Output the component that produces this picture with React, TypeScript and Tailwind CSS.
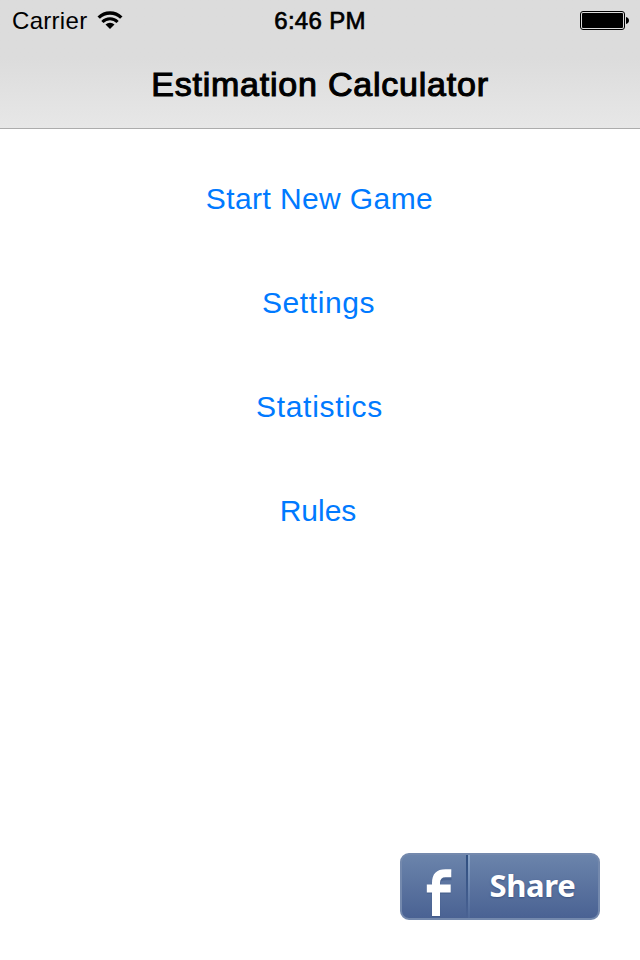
import React from "react";

const MENU = [
  {label: "Start New Game", style: "tracking-[0.4px] pr-[1px]"},
  {label: "Settings", style: "tracking-[0.6px] pr-[3px]"},
  {label: "Statistics", style: "tracking-[0.7px] pr-[1px]"},
  {label: "Rules", style: "pr-[4px]"},
];

const WifiIcon = () => (
  <svg width="26" height="18" viewBox="0 0 26 18" fill="none" stroke="#000" strokeWidth="3.4">
    <path d="M1.7 6.6a16 16 0 0 1 22.6 0"/>
    <path d="M5.4 11a10.6 10.6 0 0 1 15.2 0" strokeWidth="3.1"/>
    <path d="M13 18 8.5 13.6a6.3 6.3 0 0 1 9 0z" fill="#000" stroke="none"/>
  </svg>
);

const BatteryIcon = () => (
  <svg width="50" height="20" viewBox="0 0 50 20">
    <rect x="0.5" y="0.5" width="44" height="18" rx="2.5" fill="none" stroke="#000"/>
    <rect x="2" y="2" width="41" height="15" rx="1" fill="#000"/>
    <path d="M46 6c1.8.4 3 1.7 3 3.5s-1.2 3.1-3 3.5z" fill="#000"/>
  </svg>
);

const StatusBar = () => (
  <div className="grid grid-cols-3 h-10 items-center">
    <div className="flex items-center pl-3">
      <span className="text-[24px] leading-10 tracking-[0.3px] pt-[1px]">Carrier</span>
      <div className="ml-[10px] pb-[2px]"><WifiIcon/></div>
    </div>
    <span className="text-center text-[24px] leading-10 tracking-[0.3px] pt-[1px] [-webkit-text-stroke:0.7px_#000]">6:46 PM</span>
    <div className="flex justify-end pr-[10px] pt-[2px]"><div className="h-[22px]"><BatteryIcon/></div></div>
  </div>
);

const ShareButton = () => (
  <button className="flex w-[200px] h-[67px] rounded-[9px] border-2 border-[#7489ad] bg-linear-to-b from-[#6b84ab] to-[#4a6293] overflow-hidden">
    <svg width="64" height="63" viewBox="0 0 64 63">
      <path d="M49.5 20H43.5Q34 20 34 29V61M24.8 33.6H48.7" fill="none" stroke="#3e5683" strokeWidth="8.4" opacity="0.6" transform="translate(0 1)"/>
      <path d="M49.3 18.3H43.5Q34 18.3 34 28V61M24.8 33.6H48.7" fill="none" stroke="#fff" strokeWidth="8"/>
    </svg>
    <div className="w-[2px] h-full bg-linear-to-b from-[#2f4f80] to-[#4a6293]"/>
    <div className="w-[2px] h-full bg-linear-to-b from-[#8aa5c8] to-[#4f6898]"/>
    <span className="flex-1 h-full pr-[3px] text-center font-['Noto_Sans',sans-serif] font-bold text-[31px] leading-[61px] tracking-[-0.3px] text-white [text-shadow:0_1px_2px_#3a5180]">Share</span>
  </button>
);

export default function App() {
  return (
    <div className="flex flex-col w-[640px] h-[960px] bg-white text-black font-['Liberation_Sans',Arial,sans-serif] overflow-hidden">
      <header className="h-[129px] border-b border-[#acacac] bg-linear-to-b from-[#dcdcdc] from-45% to-[#e7e7e7]">
        <StatusBar/>
        <h1 className="text-center text-[34px] leading-[88px] tracking-[0.78px] [-webkit-text-stroke:1.1px_#000]">Estimation Calculator</h1>
      </header>
      <nav className="flex flex-col items-center gap-11 pt-[39px]">
        {MENU.map(item =>
          <button key={item.label} className={`h-[60px] text-[30px] text-[#007aff] ${item.style}`}>{item.label}</button>
        )}
      </nav>
      <div className="flex justify-end mt-auto pr-10 pb-10">
        <ShareButton/>
      </div>
    </div>
  );
}
